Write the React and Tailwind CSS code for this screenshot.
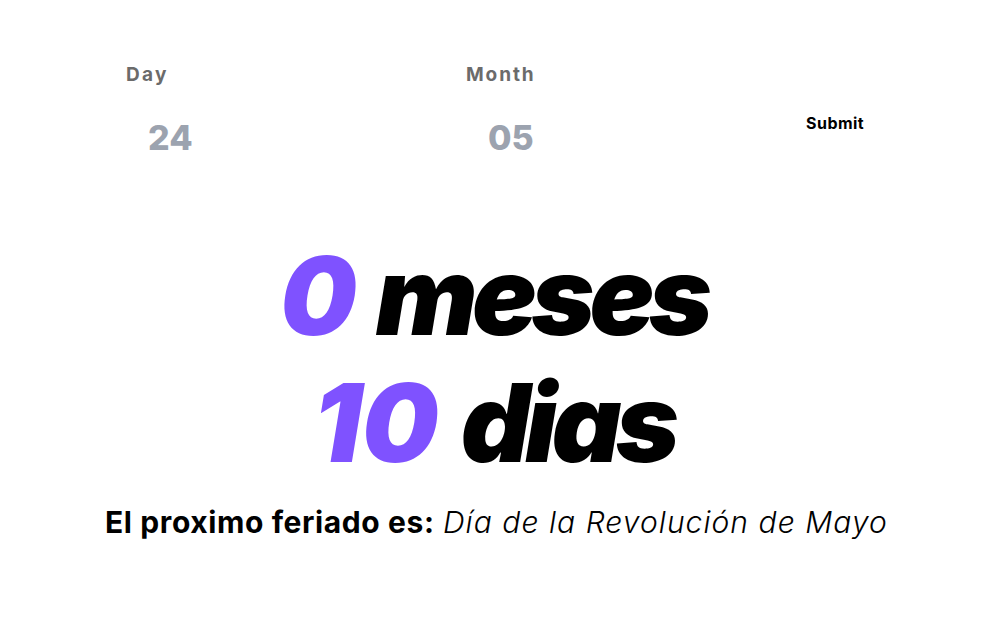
import { useState } from 'react';

export default function App() {
  const [day, setDay] = useState('24');
  const [month, setMonth] = useState('05');

  return (
    <div className="min-h-screen bg-white font-['Inter','Noto_Sans',sans-serif] text-black">
      {/* formulario */}
      <form
        className="flex items-start pl-[126px] pt-[61px]"
        onSubmit={(e) => e.preventDefault()}
      >
        <div className="flex w-[340px] flex-col">
          <label className="text-[19px] font-bold tracking-[0.12em] text-[#6b6b6b]">
            Day
          </label>
          <input
            value={day}
            onChange={(e) => setDay(e.target.value)}
            className="mt-[28px] w-[200px] bg-transparent pl-[22px] text-[34px] font-extrabold leading-[40px] text-[#9ca3af] outline-none"
          />
        </div>
        <div className="flex w-[340px] flex-col">
          <label className="text-[19px] font-bold tracking-[0.1em] text-[#6b6b6b]">
            Month
          </label>
          <input
            value={month}
            onChange={(e) => setMonth(e.target.value)}
            className="mt-[28px] w-[200px] bg-transparent pl-[22px] text-[34px] font-extrabold leading-[40px] text-[#9ca3af] outline-none"
          />
        </div>
        <button
          type="submit"
          className="mt-[50px] text-[16px] font-bold tracking-[0.03em] text-black"
        >
          Submit
        </button>
      </form>

      {/* resultado */}
      <div className="mt-[74px] flex flex-col items-center pr-[16px]">
        <h1 className="text-[108px] font-black italic leading-[127px] tracking-[-0.05em] [word-spacing:8px]">
          <span className="text-[#7f52ff]">0</span> meses
        </h1>
        <h1 className="text-[108px] font-black italic leading-[127px] tracking-[-0.05em] [word-spacing:6px]">
          <span className="tracking-normal text-[#7f52ff]">10</span> dias
        </h1>
        <p className="mt-[18px] pl-[6px] text-[30px] leading-[36px]">
          <span className="font-bold tracking-[0.02em]">El proximo feriado es:</span>{' '}
          <span className="font-light italic tracking-[0.035em]">Día de la Revolución de Mayo</span>
        </p>
      </div>
    </div>
  );
}
